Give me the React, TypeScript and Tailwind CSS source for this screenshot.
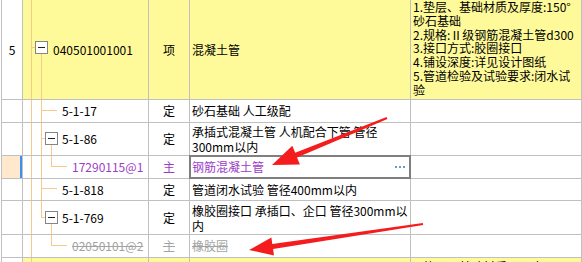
import React from "react";

const orange = "#f8c88c";

function VLine({ x, y1, y2 }: { x: number; y1: number; y2: number }) {
    return <rect x={x} y={y1} width={1} height={y2 - y1} fill={orange} />;
}

function HLine({ y, x1, x2 }: { y: number; x1: number; x2: number }) {
    return <rect x={x1} y={y} width={x2 - x1} height={1} fill={orange} />;
}

function MinusBox({ x, y }: { x: number; y: number }) {
    return (
        <g>
            <rect x={x + 0.5} y={y + 0.5} width={12} height={12} fill="#fff" stroke="#858585" />
            <rect x={x + 3} y={y + 6} width={7} height={1} fill="#222" />
        </g>
    );
}

// col 2 tree cell: connectors are drawn behind the code text
function TreeCell({
    h,
    pad,
    className = "",
    bg = "",
    children,
    text,
}: {
    h: number;
    pad: string;
    className?: string;
    bg?: string;
    children: React.ReactNode;
    text?: string;
}) {
    return (
        <div className={`relative flex items-center border-r border-b border-[#c0c0c0] ${bg}`}>
            <svg className="absolute inset-0" width={125} height={h}>
                {children}
            </svg>
            <span className={`relative ${pad} ${className}`}>{text}</span>
        </div>
    );
}

const cell = "border-r border-b border-[#c0c0c0]";

export default function App() {
    return (
        <div className="relative w-[582px] h-[262px] overflow-hidden bg-white text-[12px] text-black font-['Noto_Sans_CJK_SC',sans-serif]">
            <div className="ml-px border-l border-[#c0c0c0]">
                {/* row 5: 混凝土管 */}
                <div className="grid grid-cols-[21px_126px_41px_221px_171px] h-[100px]">
                    <div className={`${cell} flex items-center justify-center`}>5</div>
                    <TreeCell h={99} pad="pl-[30px]" bg="bg-[#fffa99]" text="040501001001">
                        <VLine x={8} y1={0} y2={99} />
                        <HLine y={47} x1={8} x2={12} />
                        <VLine x={18} y1={54} y2={99} />
                        <MinusBox x={12} y={41} />
                    </TreeCell>
                    <div className={`${cell} bg-[#fffa99] flex items-center justify-center`}>项</div>
                    <div className={`${cell} bg-[#fffa99] flex items-center pl-0.5`}>混凝土管</div>
                    <div className={`${cell} bg-[#fffa99] pl-0.5 leading-[13.8px] whitespace-nowrap`}>
                        <div>1.垫层、基础材质及厚度:150°</div>
                        <div>砂石基础</div>
                        <div>2.规格:Ⅱ级钢筋混凝土管d300</div>
                        <div>3.接口方式:胶圈接口</div>
                        <div>4.铺设深度:详见设计图纸</div>
                        <div>5.管道检验及试验要求:闭水试</div>
                        <div>验</div>
                    </div>
                </div>

                {/* 5-1-17 */}
                <div className="grid grid-cols-[21px_126px_41px_221px_171px] h-[23px]">
                    <div className={cell} />
                    <TreeCell h={22} pad="pl-[39px]" text="5-1-17">
                        <VLine x={8} y1={0} y2={22} />
                        <VLine x={18} y1={0} y2={22} />
                        <HLine y={10} x1={18} x2={34} />
                    </TreeCell>
                    <div className={`${cell} flex items-center justify-center`}>定</div>
                    <div className={`${cell} flex items-center pl-0.5`}>砂石基础 人工级配</div>
                    <div className={cell} />
                </div>

                {/* 5-1-86 */}
                <div className="grid grid-cols-[21px_126px_41px_221px_171px] h-[33px]">
                    <div className={cell} />
                    <TreeCell h={32} pad="pl-[39px]" text="5-1-86">
                        <VLine x={8} y1={0} y2={32} />
                        <VLine x={18} y1={0} y2={32} />
                        <HLine y={15} x1={18} x2={22} />
                        <VLine x={28} y1={22} y2={32} />
                        <MinusBox x={22} y={9} />
                    </TreeCell>
                    <div className={`${cell} flex items-center justify-center`}>定</div>
                    <div className={`${cell} flex flex-col justify-center pl-0.5 leading-[15px] whitespace-nowrap`}>
                        <div>承插式混凝土管 人机配合下管 管径</div>
                        <div>300mm以内</div>
                    </div>
                    <div className={cell} />
                </div>

                {/* selected: 17290115@1 */}
                <div className="grid grid-cols-[21px_126px_41px_221px_171px] h-[23px]">
                    <div className={`${cell} bg-[#ffe8cc] flex justify-end`}>
                        <div className="w-[2px] bg-[#3d8ff0]" />
                    </div>
                    <TreeCell h={22} pad="pl-[49px]" className="text-[#9b3cc6]" text="17290115@1">
                        <VLine x={8} y1={0} y2={22} />
                        <VLine x={18} y1={0} y2={22} />
                        <VLine x={28} y1={0} y2={10} />
                        <HLine y={10} x1={28} x2={44} />
                    </TreeCell>
                    <div className={`${cell} flex items-center justify-center text-[#9b3cc6]`}>主</div>
                    <div className={`${cell} relative flex items-center justify-between pl-0.5 pr-[5px] text-[#9b3cc6]`}>
                        <span>钢筋混凝土管</span>
                        <span className="flex gap-[2px]">
                            <span className="w-[2px] h-[2px] bg-[#5f9bd6]" />
                            <span className="w-[2px] h-[2px] bg-[#5f9bd6]" />
                            <span className="w-[2px] h-[2px] bg-[#5f9bd6]" />
                        </span>
                        <div className="absolute -inset-px border-2 border-[#7f7f7f]" />
                    </div>
                    <div className={cell} />
                </div>

                {/* 5-1-818 */}
                <div className="grid grid-cols-[21px_126px_41px_221px_171px] h-[22px]">
                    <div className={cell} />
                    <TreeCell h={21} pad="pl-[39px]" text="5-1-818">
                        <VLine x={8} y1={0} y2={21} />
                        <VLine x={18} y1={0} y2={21} />
                        <HLine y={9} x1={18} x2={34} />
                    </TreeCell>
                    <div className={`${cell} flex items-center justify-center`}>定</div>
                    <div className={`${cell} flex items-center pl-0.5`}>管道闭水试验 管径400mm以内</div>
                    <div className={cell} />
                </div>

                {/* 5-1-769 */}
                <div className="grid grid-cols-[21px_126px_41px_221px_171px] h-[34px]">
                    <div className={cell} />
                    <TreeCell h={33} pad="pl-[39px]" text="5-1-769">
                        <VLine x={8} y1={0} y2={33} />
                        <VLine x={18} y1={0} y2={16} />
                        <HLine y={16} x1={18} x2={22} />
                        <VLine x={28} y1={23} y2={33} />
                        <MinusBox x={22} y={10} />
                    </TreeCell>
                    <div className={`${cell} flex items-center justify-center`}>定</div>
                    <div className={`${cell} flex flex-col justify-center pl-0.5 leading-[15px] whitespace-nowrap overflow-hidden`}>
                        <div>橡胶圈接口 承插口、企口 管径300mm以</div>
                        <div>内</div>
                    </div>
                    <div className={cell} />
                </div>

                {/* deleted: 02050101@2 */}
                <div className="grid grid-cols-[21px_126px_41px_221px_171px] h-[23px]">
                    <div className={cell} />
                    <TreeCell h={22} pad="pl-[49px]" className="text-[#a3a3a3] line-through" text="02050101@2">
                        <VLine x={8} y1={0} y2={22} />
                        <VLine x={28} y1={0} y2={10} />
                        <HLine y={10} x1={28} x2={44} />
                    </TreeCell>
                    <div className={`${cell} flex items-center justify-center text-[#a3a3a3] line-through`}>主</div>
                    <div className={`${cell} flex items-center pl-0.5 text-[#a3a3a3] line-through`}>橡胶圈</div>
                    <div className={cell} />
                </div>

                {/* next item, cut off */}
                <div className="grid grid-cols-[21px_126px_41px_221px_171px] h-[40px]">
                    <div className={cell} />
                    <TreeCell h={39} pad="pl-[30px]" bg="bg-[#fffa99]">
                        <VLine x={8} y1={0} y2={39} />
                    </TreeCell>
                    <div className={`${cell} bg-[#fffa99]`} />
                    <div className={`${cell} bg-[#fffa99]`} />
                    <div className={`${cell} bg-[#fffa99] pl-0.5 pt-[2px] leading-[13.8px] whitespace-nowrap`}>
                        1.垫层、基础材质及厚度:150°
                    </div>
                </div>
            </div>

            {/* red annotation arrows */}
            <svg className="absolute inset-0 pointer-events-none" width={582} height={262}>
                <polygon
                    points="387.4,118.9 297.0,157.4 299.9,164.4 272,165 292.3,145.8 295.2,152.8 386.6,117.1"
                    fill="#f41c1c"
                />
                <polygon
                    points="423.1,225.0 273.1,249.0 274.0,255.4 249,250 271.4,237.6 272.3,244.0 422.9,223.0"
                    fill="#f41c1c"
                />
            </svg>
        </div>
    );
}
